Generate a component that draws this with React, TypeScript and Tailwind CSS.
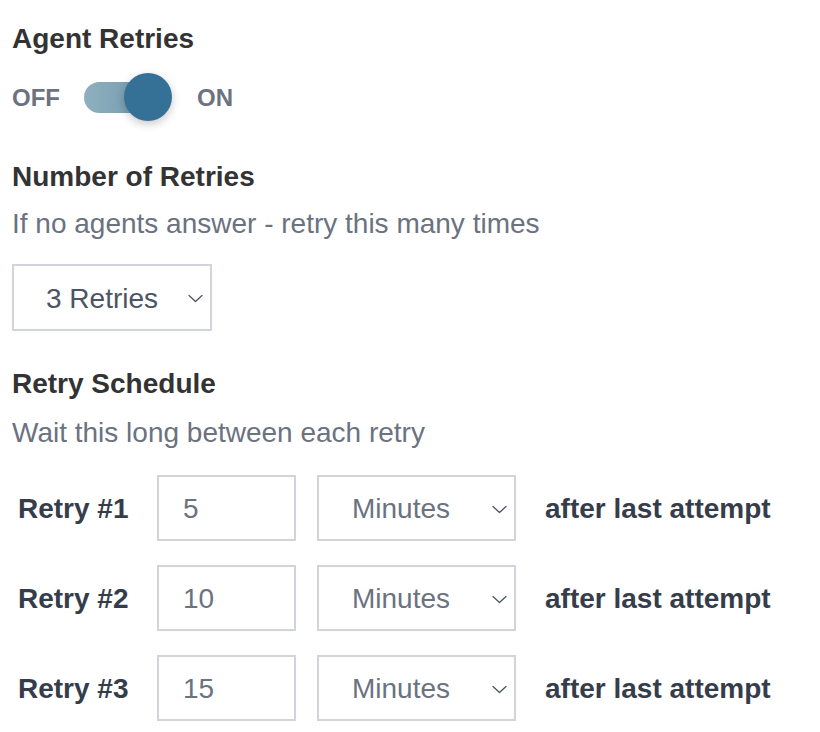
import type { ReactNode } from 'react';

const FONT = "font-['Liberation_Sans',Arial,sans-serif]";

function Chevron() {
  return (
    <svg width="15" height="9" viewBox="0 0 15 9" fill="none" className="shrink-0">
      <path d="M1 1.5l6.5 6 6.5-6" stroke="#4b5563" strokeWidth="1.3" strokeLinecap="round" strokeLinejoin="round" />
    </svg>
  );
}

function Heading({ children }: { children: ReactNode }) {
  return <h2 className="text-[28px] leading-[32px] font-bold text-[#333333]">{children}</h2>;
}

function Hint({ children }: { children: ReactNode }) {
  return <p className="text-[28px] leading-[32px] text-[#6b7280]">{children}</p>;
}

function Toggle() {
  return (
    <div className="flex items-center h-[48px]">
      <span className="text-[24px] font-bold text-[#6b7280] w-[72px] pt-[1px]">OFF</span>
      <div className="relative w-[88px] h-[48px] flex items-center">
        <div className="h-[31px] w-[80px] rounded-full bg-gradient-to-r from-[#8eafbf] to-[#6e97ad]" />
        <div className="absolute right-0 top-0 w-[48px] h-[48px] rounded-full bg-[#357196] shadow-[0_3px_10px_rgba(0,0,0,0.22)]" />
      </div>
      <span className="ml-[25px] text-[24px] font-bold text-[#6b7280] pt-[1px]">ON</span>
    </div>
  );
}

function RetryRow({ n, value }: { n: number; value: string }) {
  return (
    <div className="flex items-center h-[66px]">
      <span className="w-[145px] pl-[6px] pt-[2px] text-[28px] font-bold text-[#363d4a]">Retry #{n}</span>
      <div className="w-[139px] h-[66px] border-2 border-[#d1d5db] flex items-center pl-[24px] pt-[2px] text-[28px] text-[#6b7280]">
        {value}
      </div>
      <div className="ml-[21px] w-[199px] h-[66px] border-2 border-[#d1d5db] flex items-center justify-between pl-[33px] pr-[7px] pt-[2px] text-[28px] text-[#6b7280]">
        <span>Minutes</span>
        <Chevron />
      </div>
      <span className="ml-[29px] pt-[2px] text-[28px] font-bold text-[#363d4a]">after last attempt</span>
    </div>
  );
}

export default function App() {
  return (
    <div className={`${FONT} min-h-screen bg-white pl-[12px] pt-[23px]`}>
      <Heading>Agent Retries</Heading>
      <div className="mt-[18px]">
        <Toggle />
      </div>

      <div className="mt-[40px]">
        <Heading>Number of Retries</Heading>
      </div>
      <div className="mt-[15px]">
        <Hint>If no agents answer - retry this many times</Hint>
      </div>
      <div className="mt-[24px] w-[200px] h-[67px] border-2 border-[#d1d5db] flex items-center justify-between pl-[32px] pr-[7px] pt-[2px] text-[28px] text-[#4b5563]">
        <span>3 Retries</span>
        <Chevron />
      </div>

      <div className="mt-[37px]">
        <Heading>Retry Schedule</Heading>
      </div>
      <div className="mt-[17px]">
        <Hint>Wait this long between each retry</Hint>
      </div>

      <div className="mt-[26px] flex flex-col gap-[24px]">
        <RetryRow n={1} value="5" />
        <RetryRow n={2} value="10" />
        <RetryRow n={3} value="15" />
      </div>
    </div>
  );
}
